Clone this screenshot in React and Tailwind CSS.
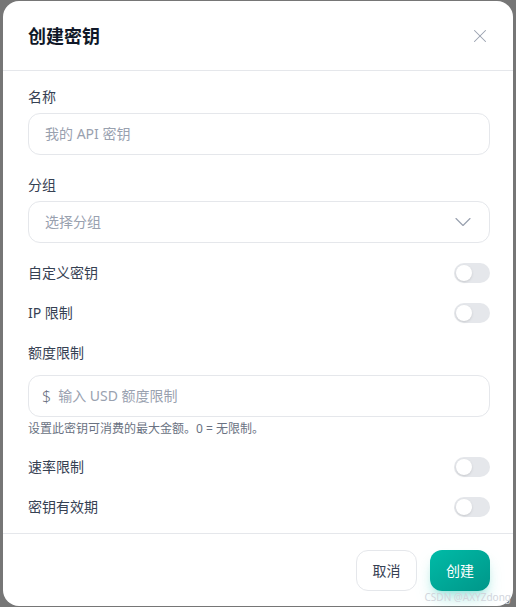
import React from "react";
import { X, ChevronDown } from "lucide-react";

const font = { fontFamily: '"Noto Sans", "Noto Sans CJK SC", sans-serif' };

const Toggle = () => (
  <div className="w-9 h-5 rounded-full bg-gray-200 p-0.5 flex items-center">
    <div className="w-4 h-4 rounded-full bg-white shadow-sm" />
  </div>
);

const ToggleRow = ({ label, className = "" }) => (
  <div className={`flex items-center justify-between h-5 ${className}`}>
    <span className="text-sm leading-5 text-gray-700">{label}</span>
    <Toggle />
  </div>
);

export default function App() {
  return (
    <div
      className="w-[516px] h-[607px] bg-[#767676] pt-px pl-[3px] overflow-hidden"
      style={font}
    >
      <div className="relative w-[510px] h-[605px] bg-white rounded-2xl flex flex-col">
        <div className="h-[70px] pl-[25px] pr-[22px] flex items-center justify-between border-b border-gray-200">
          <h2 className="text-lg font-bold text-gray-900">创建密钥</h2>
          <X className="w-[22px] h-[22px] text-gray-400" strokeWidth={1.1} />
        </div>

        <div className="pl-[25px] pr-[23px] pt-4 pb-4 border-b border-gray-200">
          <label className="block text-sm leading-5 text-gray-700">名称</label>
          <div className="mt-1.5 h-[42px] rounded-xl border border-gray-200 flex items-center px-4">
            <span className="text-sm text-gray-400">我的 API 密钥</span>
          </div>

          <label className="block mt-5 text-sm leading-5 text-gray-700">分组</label>
          <div className="mt-1.5 h-[42px] rounded-xl border border-gray-200 flex items-center justify-between pl-4 pr-3">
            <span className="text-sm text-gray-400">选择分组</span>
            <ChevronDown className="w-7 h-7 text-gray-400" strokeWidth={1} />
          </div>

          <ToggleRow label="自定义密钥" className="mt-5" />
          <ToggleRow label="IP 限制" className="mt-5" />

          <label className="block mt-5 text-sm leading-5 text-gray-700">额度限制</label>
          <div className="mt-3 h-[42px] rounded-xl border border-gray-200 flex items-center pl-[13px] pr-4 gap-[7px]">
            <span className="text-base font-light text-gray-500">$</span>
            <span className="text-sm text-gray-400">输入 USD 额度限制</span>
          </div>
          <p className="mt-1 text-xs leading-4 text-gray-500">
            设置此密钥可消费的最大金额。0 = 无限制。
          </p>

          <ToggleRow label="速率限制" className="mt-5" />
          <ToggleRow label="密钥有效期" className="mt-5" />
        </div>

        <div className="flex justify-end gap-[13px] pt-4 pr-[23px]">
          <button className="w-[61px] h-[41px] rounded-xl border border-gray-200 bg-white text-sm text-gray-700">
            取消
          </button>
          <button className="w-[60px] h-[41px] rounded-xl bg-gradient-to-br from-teal-500 to-teal-600 text-sm text-white shadow-lg shadow-teal-500/30">
            创建
          </button>
        </div>

        <span className="absolute right-[2px] bottom-[4px] text-[10px] leading-none text-gray-300">
          CSDN @AXYZdong
        </span>
      </div>
    </div>
  );
}
